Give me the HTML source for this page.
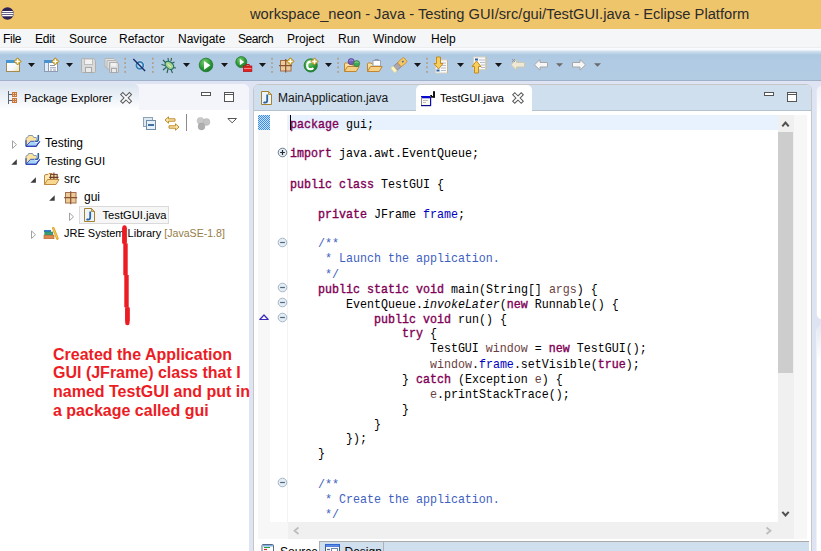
<!DOCTYPE html>
<html><head><meta charset="utf-8">
<style>
*{box-sizing:border-box;margin:0;padding:0}
html,body{width:821px;height:551px;overflow:hidden;background:#DFE4F5;font-family:"Liberation Sans",sans-serif;font-size:12px;color:#000}
.a{position:absolute}
.t{position:absolute;white-space:pre;line-height:14px}
svg{position:absolute;overflow:visible}
#title{left:0;top:0;width:821px;height:29px;background:#EFC56B}
#menu{left:0;top:29px;width:821px;height:18px;background:#F5F6F7}
#tbar{left:0;top:47px;width:821px;height:34px;background:linear-gradient(#EBEDEF 0px,#EBEDEF 1px,#F8FAFD 1px,#F8FAFD 3px,#D3E2F1 4px,#ADC8E1 8px,#B1CBE4 15px,#B2CCE4 33px,#9FB2C9 33px)}
.code{position:absolute;left:290px;top:116.5px;font-family:"Liberation Mono",monospace;font-size:11.67px;white-space:pre;line-height:14.151px;color:#000;transform:scaleY(1.06);transform-origin:0 0}
.kw{color:#7F0055;font-weight:normal;-webkit-text-stroke:0.35px #7F0055}
.fld{color:#0000C0}
.cm{color:#3F5FBF}
.loc{color:#6A3E3E}
.it{font-style:italic}
#red{left:53px;top:345.6px;font-weight:bold;font-size:16px;line-height:18.65px;color:#EC1C24;white-space:pre}
</style></head><body>
<!-- title bar -->
<div id="title" class="a"></div>
<svg style="left:0;top:6px" width="16" height="16" viewBox="0 0 16 16"><circle cx="7.5" cy="7.5" r="6.2" fill="#2C2255"/><rect x="2.2" y="5" width="10.6" height="1.3" fill="#fff"/><rect x="1.5" y="7" width="12" height="1.3" fill="#fff"/><rect x="2.2" y="9" width="10.6" height="1.3" fill="#fff"/></svg>
<div class="t" style="left:250px;top:6px;font-size:14.7px;line-height:17px;color:#2b2b2b">workspace_neon - Java - Testing GUI/src/gui/TestGUI.java - Eclipse Platform</div>
<!-- menu -->
<div id="menu" class="a"></div>
<div class="t" style="left:3px;top:32px;letter-spacing:-0.3px">File</div>
<div class="t" style="left:35px;top:32px;letter-spacing:-0.2px">Edit</div>
<div class="t" style="left:69px;top:32px">Source</div>
<div class="t" style="left:119px;top:32px">Refactor</div>
<div class="t" style="left:178px;top:32px">Navigate</div>
<div class="t" style="left:238px;top:32px;letter-spacing:-0.45px">Search</div>
<div class="t" style="left:287px;top:32px">Project</div>
<div class="t" style="left:338px;top:32px">Run</div>
<div class="t" style="left:373px;top:32px">Window</div>
<div class="t" style="left:431px;top:32px">Help</div>
<!-- toolbar -->
<div id="tbar" class="a"></div>
<svg style="left:0;top:0" width="821" height="100">
<defs>
<g id="plus"><path d="M0,-3.6 L3.6,0 L0,3.6 L-3.6,0 Z" fill="#D9AE35" stroke="#A9851E" stroke-width="0.8"/><path d="M0,-2.2 V2.2 M-2.2,0 H2.2" stroke="#fff" stroke-width="1.3"/></g>
<path id="dd" d="M0,0 H7 L3.5,4 Z" fill="#161616"/>
<path id="ddg" d="M0,0 H7 L3.5,3.6 Z" fill="#6A6A6A"/>
<g id="dots"><rect x="-0.8" y="57.8" width="1.6" height="1.8" fill="#B39C7E"/><rect x="-0.8" y="62.2" width="1.6" height="1.8" fill="#B39C7E"/><rect x="-0.8" y="66.4" width="1.6" height="1.8" fill="#B39C7E"/><rect x="-0.8" y="71" width="1.6" height="1.8" fill="#B39C7E"/></g>
<linearGradient id="gwin" x1="0" y1="0" x2="1" y2="1"><stop offset="0" stop-color="#fff"/><stop offset="0.6" stop-color="#F4F8FC"/><stop offset="1" stop-color="#F2DFA0"/></linearGradient>
<radialGradient id="ggreen" cx="0.4" cy="0.3" r="0.7"><stop offset="0" stop-color="#7CCB6E"/><stop offset="0.6" stop-color="#2F9C3B"/><stop offset="1" stop-color="#1D7A2A"/></radialGradient>
<linearGradient id="gfold" x1="0" y1="0" x2="0" y2="1"><stop offset="0" stop-color="#FCE9B0"/><stop offset="1" stop-color="#EFC772"/></linearGradient>
</defs>
<!-- new wizard -->
<rect x="6.5" y="60.5" width="13" height="11" fill="url(#gwin)" stroke="#A38A52"/>
<rect x="6" y="60" width="11" height="3" fill="#4796D4"/>
<use href="#plus" x="17.6" y="61.4"/>
<use href="#dd" x="28" y="63"/>
<!-- new project -->
<rect x="44.5" y="60.5" width="13" height="11" fill="#fff" stroke="#8F9BB0"/>
<rect x="44" y="60" width="11" height="3" fill="#4A92CF"/>
<rect x="45" y="63" width="3.5" height="8" fill="#DCEEFC"/>
<path d="M48.5,63 V71.5" stroke="#8F9BB0"/>
<path d="M50,65.5 H55 M50,67.8 H56 M50,70 H52 M53,70 H56" stroke="#8A95A8" stroke-width="1"/>
<use href="#plus" x="55.3" y="61.4"/>
<use href="#dd" x="66" y="63"/>
<!-- save disabled -->
<path d="M82.5,58.5 H93.5 L95.5,60.5 V71.5 Q95.5,72.5 94.5,72.5 H82.5 Q81.5,72.5 81.5,71.5 V59.5 Q81.5,58.5 82.5,58.5 Z" fill="#DADADA" stroke="#AFAFAF"/>
<rect x="84.5" y="59" width="8" height="5.5" fill="#F2F2F2" stroke="#BDBDBD"/>
<rect x="85.5" y="67.5" width="6" height="5" fill="#EAEAEA" stroke="#A8A8A8"/>
<!-- save all disabled -->
<path d="M105,58.5 H114 L115.5,60 V67 H105 Z" fill="#E4E4E4" stroke="#B4B4B4"/>
<path d="M107,60.5 H116 L117.5,62 V69 H107 Z" fill="#E0E0E0" stroke="#B4B4B4"/>
<path d="M109.5,62.5 H117 L118.5,64 V72.5 H109.5 Z" fill="#DADADA" stroke="#AFAFAF"/>
<rect x="111" y="63" width="5.5" height="3.5" fill="#F2F2F2"/>
<rect x="111.5" y="68.5" width="5" height="4" fill="#EAEAEA" stroke="#A8A8A8"/>
<use href="#dots" x="125.2" y="0"/>
<!-- skip breakpoints -->
<circle cx="139.8" cy="65.3" r="4.6" fill="#fff"/>
<circle cx="139.8" cy="65.3" r="3.5" fill="#BFDCEF" stroke="#2F7DB3" stroke-width="1.8"/>
<path d="M133.3,59.1 L145.1,71" stroke="#1B2C6E" stroke-width="1.4"/>
<use href="#dots" x="152.8" y="0"/>
<!-- debug bug -->
<g stroke="#2C5F4E" stroke-width="1.1">
<path d="M163,60 L166,63 M161.5,64.5 L165,65.5 M163,70 L166,67.5 M168,58 L168.5,61.5 M171.5,57.8 L171,61 M174.5,62 L171.5,63.5 M176,68 L172.5,67.5 M167,73 L168,69 M172.5,73 L171,69.5"/>
</g>
<ellipse cx="169.4" cy="65.3" rx="4.8" ry="3.4" transform="rotate(40 169.4 65.3)" fill="#A9D38D" stroke="#1E6E66" stroke-width="1.2"/>
<path d="M167.5,64 L171,67" stroke="#E8F5E0" stroke-width="1"/>
<use href="#dd" x="183" y="63"/>
<!-- run -->
<circle cx="206" cy="65" r="6.8" fill="url(#ggreen)" stroke="#1E7A2C" stroke-width="0.8"/>
<path d="M204,60.9 L210.4,65.3 L204,69.7 Z" fill="#fff"/>
<use href="#dd" x="221" y="63"/>
<!-- external tools -->
<circle cx="241.3" cy="62.1" r="5.5" fill="url(#ggreen)" stroke="#1E7A2C" stroke-width="0.8"/>
<path d="M239.8,59 L244.3,62.1 L239.8,65.2 Z" fill="#fff"/>
<rect x="243.5" y="66" width="8.3" height="5.5" fill="#E22424" stroke="#B31515" stroke-width="0.8"/>
<path d="M246,66 V64.5 H249.3 V66" fill="none" stroke="#C01818" stroke-width="1"/>
<path d="M244,68.5 H251.5" stroke="#F7A0A0" stroke-width="0.8"/>
<use href="#dd" x="259" y="63"/>
<use href="#dots" x="272" y="0"/>
<!-- new package -->
<rect x="280.5" y="60.5" width="10.5" height="10.5" fill="#EBCB98" stroke="#A56D4C"/>
<path d="M285.7,59 V72.5 M279,65.7 H292" stroke="#8A5234" stroke-width="1.2"/>
<use href="#plus" x="290.4" y="61.3"/>
<!-- new class -->
<circle cx="310.7" cy="65.4" r="6.6" fill="url(#ggreen)" stroke="#1E7A2C" stroke-width="0.8"/>
<path d="M313.3,62.8 Q312.2,61.6 310.6,61.6 Q307.2,61.6 307.2,65.4 Q307.2,69.2 310.6,69.2 Q312.2,69.2 313.3,68" fill="none" stroke="#fff" stroke-width="2.2"/>
<use href="#plus" x="314.5" y="61.5"/>
<use href="#dd" x="325" y="63"/>
<use href="#dots" x="338.1" y="0"/>
<!-- open type -->
<path d="M344.5,71.5 V64 Q344.5,63 345.5,63 H348 L349,64 H353 V66" fill="url(#gfold)" stroke="#C08632"/>
<path d="M344.5,71.5 L347.5,66.5 H359.2 L356.2,71.5 Z" fill="#F4D184" stroke="#C08632" stroke-linejoin="round"/>
<circle cx="351.2" cy="61.6" r="3.1" fill="#7560B8" stroke="#4A3590" stroke-width="0.6"/>
<path d="M349.3,60.6 Q351.2,59.2 353.1,60.6" stroke="#B8A8E0" stroke-width="0.8" fill="none"/>
<circle cx="356.6" cy="63.6" r="3.1" fill="#45A650" stroke="#26743A" stroke-width="0.6"/>
<path d="M354.7,62.6 Q356.6,61.2 358.5,62.6" stroke="#A8DAA8" stroke-width="0.8" fill="none"/>
<!-- open task -->
<path d="M367.5,71.5 V64 Q367.5,63 368.5,63 H371 L372,64 H376 V66" fill="url(#gfold)" stroke="#C08632"/>
<rect x="373" y="60.5" width="7.5" height="5.5" fill="#fff" stroke="#9AA5B8"/>
<path d="M375,60.5 V59.5 H378.5 V60.5" fill="none" stroke="#8C96A8"/>
<path d="M367.5,71.5 L370.5,66.5 H382.2 L379.2,71.5 Z" fill="#F4D184" stroke="#C08632" stroke-linejoin="round"/>
<!-- search -->
<g transform="translate(399 65) rotate(-41) scale(0.85) translate(-399 -65)">
<rect x="393" y="61.8" width="6.5" height="6.4" fill="#ABA8B2" stroke="#807C88" stroke-width="0.8"/>
<rect x="399.5" y="61.6" width="9.5" height="6.8" rx="1.2" fill="#F4C766" stroke="#C68828" stroke-width="0.9"/>
<path d="M393,61.8 L389.5,61.3 Q388.8,65 389.5,68.7 L393,68.2 Z" fill="#FFF7C8" stroke="#EBD27A" stroke-width="0.7"/>
<rect x="404" y="64.2" width="2" height="1.6" fill="#2F5FA0"/>
</g>
<use href="#dd" x="414" y="63"/>
<use href="#dots" x="427" y="0"/>
<!-- next annotation -->
<path d="M435.5,60 H447.5 V73 H435.5 Z" fill="#F8F9FC" stroke="#D8D2C0"/>
<path d="M447.5,60 V73" stroke="#C8B58A"/>
<path d="M440,63 H446 M441,65.5 H446 M441,68 H446 M441,70.5 H446" stroke="#B7BECA"/>
<rect x="436.5" y="69.5" width="3" height="2" fill="#2B5FA6"/>
<path d="M436.5,57 H440.5 V63.5 H443 L438.5,69 L434,63.5 H436.5 Z" fill="#F6CF5C" stroke="#C58A1F" stroke-linejoin="round"/>
<use href="#dd" x="457" y="63"/>
<!-- prev annotation -->
<path d="M473.5,57 H486 V69.5 H473.5 Z" fill="#F8F9FC" stroke="#D8D2C0"/>
<path d="M486,57 V69.5" stroke="#C8B58A"/>
<rect x="475" y="58.5" width="3" height="2" fill="#2B5FA6"/>
<path d="M479,60 H485 M480,62.5 H485 M481,65 H485 M481,67.5 H485" stroke="#B7BECA"/>
<path d="M474.5,73 H478.5 V66.5 H481 L476.5,61 L472,66.5 H474.5 Z" fill="#F6CF5C" stroke="#C58A1F" stroke-linejoin="round"/>
<use href="#dd" x="495" y="63"/>
<!-- last edit -->
<path d="M511,64.8 L516.5,59.5 V62.5 H524.5 V67 H516.5 V70.2 Z" fill="#EEE8D5" stroke="#CFC8B0" stroke-linejoin="round"/>
<path d="M512,59 L515,62 M515,59 L512,62" stroke="#8A8A8A" stroke-width="0.8"/>
<!-- back -->
<path d="M534.5,64.8 L540,59.5 V62.5 H547.5 V67 H540 V70.2 Z" fill="#F7F7F7" stroke="#A6A6A6" stroke-linejoin="round"/>
<use href="#ddg" x="556" y="63.2"/>
<!-- forward -->
<path d="M585.5,64.8 L580,59.5 V62.5 H572.5 V67 H580 V70.2 Z" fill="#F7F7F7" stroke="#A6A6A6" stroke-linejoin="round"/>
<use href="#ddg" x="594" y="63.2"/>
</svg>


<!-- package explorer -->
<div class="a" style="left:0;top:84px;width:249px;height:467px;background:#fff;border-radius:0 6px 0 0"></div>
<div class="a" style="left:0;top:84px;width:249px;height:26px;background:#F4F5FA;border-radius:0 6px 0 0"></div>
<div class="a" style="left:0;top:84px;width:139px;height:26px;background:linear-gradient(#DAE4EF,#FFFFFF);border-radius:0 5px 0 0"></div>
<div class="t" style="left:24px;top:91px;font-size:11.2px">Package Explorer</div>
<svg style="left:0;top:0" width="821" height="140">
<!-- PE view icon -->
<path d="M8.5,91 V104 M8.5,94.5 H12 M8.5,100.5 H12" stroke="#5E6675" stroke-width="1"/>
<rect x="12" y="92" width="5" height="5" fill="#C8763A"/>
<rect x="12" y="98" width="5" height="5" fill="#C8763A"/>
<path d="M13,93 h1 v1 h-1z M15,93 h1 v1 h-1z M13,95 h1 v1 h-1z M15,95 h1 v1 h-1z M13,99 h1 v1 h-1z M15,99 h1 v1 h-1z M13,101 h1 v1 h-1z M15,101 h1 v1 h-1z" fill="#F2D4B4"/>
<!-- close X -->
<path d="M122.8,94.6 L129.4,101.2 M129.4,94.6 L122.8,101.2" stroke="#5A5A5A" stroke-width="4" stroke-linecap="square"/>
<path d="M122.8,94.6 L129.4,101.2 M129.4,94.6 L122.8,101.2" stroke="#F9FAFC" stroke-width="2" stroke-linecap="square"/>
<!-- min / max -->
<rect x="201.5" y="92.5" width="9" height="3" fill="#fff" stroke="#555"/>
<rect x="224.5" y="92.5" width="9" height="9" fill="#fff" stroke="#555"/>
<path d="M224.5,94.5 H233.5" stroke="#555" stroke-width="1"/>
<!-- collapse all -->
<rect x="143.5" y="117.5" width="9" height="9" fill="#DDE8F0" stroke="#8FA4B8"/>
<rect x="146.5" y="120.5" width="9" height="9" fill="#E6F0F7" stroke="#6F8BA5"/>
<path d="M148,125 H154" stroke="#1F4F8F" stroke-width="1.6"/>
<!-- link with editor -->
<path d="M165,120 L168.5,116.8 V118.8 H175 V121.2 H168.5 V123.2 Z" fill="#FBE7B0" stroke="#C08A2A" stroke-linejoin="round" stroke-width="1"/>
<path d="M179,127 L175.5,123.8 V125.8 H169 V128.2 H175.5 V130.2 Z" fill="#FBE7B0" stroke="#C08A2A" stroke-linejoin="round" stroke-width="1"/>
<path d="M186.5,114 V131" stroke="#8A8A8A" stroke-width="1"/>
<!-- focus on task gray balls -->
<circle cx="200.5" cy="120.8" r="3.4" fill="#C9C9C9" stroke="#B5B5B5" stroke-width="0.5"/>
<circle cx="206.5" cy="122" r="3.4" fill="#C4C4C4" stroke="#B0B0B0" stroke-width="0.5"/>
<circle cx="201.5" cy="126.5" r="3.4" fill="#AFAFAF" stroke="#9C9C9C" stroke-width="0.5"/>
<!-- view menu -->
<path d="M227.8,118.5 H236.5 L232.15,122.8 Z" fill="#fff" stroke="#555" stroke-width="1" stroke-linejoin="round"/>
</svg>


<!-- tree -->
<div class="a" style="left:79px;top:206px;width:90px;height:18px;background:#F6F6F6;border:1px solid #DADADA"></div>
<div class="t" style="left:45px;top:135.6px">Testing</div>
<div class="t" style="left:45px;top:153.6px;font-size:11.5px">Testing GUI</div>
<div class="t" style="left:64px;top:171.5px">src</div>
<div class="t" style="left:84px;top:190.3px">gui</div>
<div class="t" style="left:102.5px;top:207.5px;font-size:11.2px">TestGUI.java</div>
<div class="t" style="left:64px;top:225.8px;font-size:11px">JRE System Library <span style="color:#957D47;font-size:10.6px">[JavaSE-1.8]</span></div>
<svg style="left:0;top:130px" width="260" height="120" viewBox="0 130 260 120">
<defs>
<path id="tri-h" d="M0.5,0.5 L4.5,4.3 L0.5,8.1 Z" fill="#fff" stroke="#A2A2A2" stroke-width="1" stroke-linejoin="round"/>
<path id="tri-f" d="M5.5,0 V5.5 H0 Z" fill="#3C3C3C"/>
<g id="proj">
<path d="M1,12 V4.2 Q1,3.2 2,3.2 H2.6 L3.6,1.2 H7.6 L8.6,3.2 H11.5 V7" fill="#FBE3A2" stroke="#8C97A8" stroke-width="1"/>
<path d="M1,6 V12" stroke="#2B3FB0" stroke-width="1.1"/>
<path d="M1,12 L5.5,7 H14.8 L11.2,12 Z" fill="#A9D3F7" stroke="#3A55C0" stroke-width="1" stroke-linejoin="round"/>
<path d="M1,12 H11.2 L14.8,7" fill="none" stroke="#2236B0" stroke-width="1.1"/>
<path d="M13.3,0.6 V5 Q13.3,7 11.5,7 Q10.8,7 10.3,6.4" fill="none" stroke="#fff" stroke-width="3"/>
<path d="M13.3,0.6 V5 Q13.3,7 11.5,7 Q10.8,7 10.3,6.4" fill="none" stroke="#2A62A8" stroke-width="1.6"/>
</g>
<g id="jfile">
<path d="M0.5,0.5 H7.5 L10.5,3.5 V13.5 H0.5 Z" fill="#EEF4FB" stroke="#A3832F" stroke-width="1"/>
<path d="M7.5,0.5 V3.5 H10.5 Z" fill="#E8C870" stroke="#A3832F" stroke-width="0.8"/>
<path d="M6.2,3.5 V9.5 Q6.2,11.6 4,11.6 Q3.2,11.6 2.6,11" fill="none" stroke="#2C64A2" stroke-width="1.8"/>
</g>
</defs>
<use href="#tri-h" x="12" y="140.3"/>
<use href="#tri-f" x="11.3" y="159.2"/>
<use href="#tri-f" x="30.4" y="177.2"/>
<use href="#tri-f" x="49.2" y="195.2"/>
<use href="#tri-h" x="69" y="212.5"/>
<use href="#tri-h" x="31" y="230.4"/>
<use href="#proj" x="25" y="134.3"/>
<use href="#proj" x="25" y="152.3"/>
<!-- src folder -->
<path d="M44.5,184.5 V176 Q44.5,174.5 46,174.5 H48 L49,173.5 H52 L53,174.5 H55 V179" fill="#FCEAB6" stroke="#C08840" stroke-width="1"/>
<rect x="50.6" y="174.4" width="6.6" height="5" fill="#F5DCA0" stroke="#6A3E28" stroke-width="1"/>
<path d="M53.9,172.6 V179.5 M49.2,177.4 H58.5" stroke="#6A3E28" stroke-width="1.1"/>
<path d="M44.5,184.5 L47.5,179.5 H59 L56,184.5 Z" fill="#F7D891" stroke="#C08840" stroke-width="1" stroke-linejoin="round"/>
<!-- package gui -->
<rect x="65.5" y="192.5" width="10.5" height="10.5" fill="#EACB96" stroke="#A8704E"/>
<path d="M70.7,191.2 V204.2 M64.2,197.7 H77.2" stroke="#8A5234" stroke-width="1.2"/>
<use href="#jfile" x="84" y="208"/>
<!-- books -->
<rect x="44" y="230" width="7" height="2" fill="#2F7EC8"/>
<rect x="44.8" y="232" width="8" height="3" fill="#3AA17A" stroke="#2A7A58" stroke-width="0.6"/>
<rect x="44" y="235.2" width="10" height="3.5" fill="#DE8A4E" stroke="#B0602A" stroke-width="0.6"/>
<path d="M53.3,228.3 L57.4,238.6" stroke="#E2A324" stroke-width="2.6" stroke-linecap="round"/>
<path d="M53.3,228.3 L57.4,238.6" stroke="#F8D868" stroke-width="0.8"/>
</svg>


<svg style="left:0;top:0" width="821" height="551"><g fill="#EC1C24"><rect x="122.3" y="225.2" width="4.4" height="19" rx="2.2"/><rect x="122.3" y="228" width="4.4" height="15.5"/><rect x="123.3" y="243.4" width="4.4" height="31.8"/><rect x="124.3" y="275" width="4.4" height="32.3"/><rect x="125.2" y="307.2" width="4.4" height="18" rx="2.2"/><rect x="125.2" y="307.2" width="4.4" height="14"/></g></svg>
<div id="red" class="a">Created the Application
GUI (JFrame) class that I
named TestGUI and put in
a package called gui</div>

<!-- editor -->
<div class="a" style="left:253px;top:84px;width:559px;height:470px;background:#fff;border:1px solid #C6C6C6;border-radius:6px 6px 0 0"></div>
<div class="a" style="left:254px;top:85px;width:557px;height:26px;background:#CFDFEE;border-bottom:1px solid #B5C3D1;border-radius:5px 5px 0 0"></div>
<div class="a" style="left:416px;top:85px;width:116px;height:26px;background:#fff;border-radius:5px 5px 0 0"></div>
<div class="t" style="left:278px;top:90.5px;color:#151515">MainApplication.java</div>
<div class="t" style="left:440px;top:90.6px;font-size:11.2px">TestGUI.java</div>
<svg style="left:250px;top:84px" width="571" height="30" viewBox="250 84 571 30">
<!-- J file MainApplication -->
<path d="M261.5,91.5 H268.5 L271.5,94.5 V104.5 H261.5 Z" fill="#EEF4FB" stroke="#A3832F" stroke-width="1"/>
<path d="M268.5,91.5 V94.5 H271.5 Z" fill="#E8C870" stroke="#A3832F" stroke-width="0.8"/>
<path d="M267.2,94.5 V100.5 Q267.2,102.6 265,102.6 Q264.2,102.6 263.6,102" fill="none" stroke="#2C64A2" stroke-width="1.8"/>
<!-- JFrame icon -->
<rect x="421" y="96" width="10" height="10" fill="#FBFBF4"/>
<rect x="421" y="96" width="9" height="2.3" fill="#0A0ACF"/>
<rect x="421" y="97" width="1" height="9" fill="#8A8A8A"/>
<rect x="421" y="105" width="10" height="1.2" fill="#0A0A90"/>
<rect x="430" y="97" width="1.2" height="9" fill="#0A0AB0"/>
<path d="M423,100.5 H428 M423,102.5 H426" stroke="#B0B0B0" stroke-width="0.8"/>
<rect x="433" y="91.2" width="2" height="6.4" fill="#111"/>
<rect x="431" y="96" width="4" height="1.7" fill="#111"/>
<rect x="430.2" y="95" width="1.8" height="1.8" fill="#111"/>
<!-- close X -->
<path d="M514.8,94.8 L521.2,101.2 M521.2,94.8 L514.8,101.2" stroke="#5A5A5A" stroke-width="4" stroke-linecap="square"/>
<path d="M514.8,94.8 L521.2,101.2 M521.2,94.8 L514.8,101.2" stroke="#fff" stroke-width="2" stroke-linecap="square"/>
<!-- min / max -->
<rect x="764.5" y="92.5" width="9" height="3" fill="#fff" stroke="#555"/>
<rect x="787.5" y="92.5" width="9" height="9" fill="#fff" stroke="#555"/>
<path d="M787.5,94.5 H796.5" stroke="#555" stroke-width="1"/>
</svg>


<!-- rulers -->
<div class="a" style="left:258px;top:115px;width:12px;height:407px;background:#F7F7F7"></div>
<div class="a" style="left:287px;top:115px;width:1px;height:407px;background:#F3F3F3"></div>
<div class="a" style="left:288px;top:115px;width:490px;height:15px;background:#E8F2FE"></div>
<!-- scrollbars -->
<div class="a" style="left:778px;top:115px;width:16px;height:424px;background:#F0F0F0"></div>
<div class="a" style="left:778px;top:132px;width:15px;height:241px;background:#CDCDCD"></div>
<div class="a" style="left:258px;top:522px;width:30px;height:17px;background:#F7F7F7"></div>
<div class="a" style="left:288px;top:522px;width:490px;height:17px;background:#F0F0F0"></div>
<div class="a" style="left:794px;top:115px;width:13px;height:424px;background:#F7F7F7"></div>
<!-- bottom tabs -->
<div class="a" style="left:254px;top:541px;width:555px;height:10px;background:#CFDFEE;border-top:1px solid #A9A9A9"></div>
<div class="a" style="left:254px;top:541px;width:65px;height:10px;background:#fff"></div>
<div class="a" style="left:319px;top:541px;width:65px;height:10px;background:#CFDFEE;border-left:1px solid #B0B0B0;border-right:1px solid #B0B0B0;border-top:1px solid #A9A9A9"></div>
<div class="t" style="left:280px;top:545px">Source</div>
<div class="t" style="left:344.5px;top:545px">Design</div>

<!-- right panels -->
<div class="a" style="left:816px;top:85px;width:20px;height:235px;background:linear-gradient(#EEF2FA,#fff 30px);border:1px solid #E6E9F2;border-radius:6px 0 0 6px"></div>
<div class="a" style="left:816px;top:325px;width:20px;height:240px;background:linear-gradient(#E3E9F4,#fff 35px);border:1px solid #EEF0F6;border-radius:7px 0 0 0"></div>

<!-- code -->
<div class="code"><span class="kw">package</span> gui;

<span class="kw">import</span> java.awt.EventQueue;

<span class="kw">public</span> <span class="kw">class</span> TestGUI {

    <span class="kw">private</span> JFrame <span class="fld">frame</span>;

    <span class="cm">/**</span>
<span class="cm">     * Launch the application.</span>
<span class="cm">     */</span>
    <span class="kw">public</span> <span class="kw">static</span> <span class="kw">void</span> main(String[] <span class="loc">args</span>) {
        EventQueue.<span class="it">invokeLater</span>(<span class="kw">new</span> Runnable() {
            <span class="kw">public</span> <span class="kw">void</span> run() {
                <span class="kw">try</span> {
                    TestGUI <span class="loc">window</span> = <span class="kw">new</span> TestGUI();
                    <span class="loc">window</span>.<span class="fld">frame</span>.setVisible(<span class="kw">true</span>);
                } <span class="kw">catch</span> (Exception <span class="loc">e</span>) {
                    <span class="loc">e</span>.printStackTrace();
                }
            }
        });
    }

    <span class="cm">/**</span>
<span class="cm">     * Create the application.</span>
<span class="cm">     */</span></div>
<div class="a" style="left:290px;top:115px;width:1px;height:15px;background:#000"></div>
<svg style="left:250px;top:110px" width="571" height="441" viewBox="250 110 571 441">
<defs>
<pattern id="dith" width="2" height="2" patternUnits="userSpaceOnUse"><rect width="2" height="2" fill="#C8E0FA"/><rect width="1" height="1" fill="#3B8CEB"/><rect x="1" y="1" width="1" height="1" fill="#3B8CEB"/></pattern>
<g id="fm"><circle cx="0" cy="0" r="4.3" fill="#E3EDF5" stroke="#9DAFC2" stroke-width="0.9"/><path d="M-2.4,0 H2.4" stroke="#56667A" stroke-width="1.2"/></g>
<g id="fp"><circle cx="0" cy="0" r="4.3" fill="#E3EDF5" stroke="#5F6F82" stroke-width="0.9"/><path d="M-2.4,0 H2.4 M0,-2.4 V2.4" stroke="#2A2A2A" stroke-width="1.2"/></g>
</defs>
<rect x="258" y="115" width="12" height="15" fill="url(#dith)"/>
<use href="#fp" x="282.5" y="152.5"/>
<use href="#fm" x="282.5" y="242.5"/>
<use href="#fm" x="282.5" y="287.5"/>
<use href="#fm" x="282.5" y="302.5"/>
<use href="#fm" x="282.5" y="317.5"/>
<use href="#fm" x="282.5" y="482.5"/>
<path d="M259.8,319.5 L264,315 L268.2,319.5 Z" fill="none" stroke="#3A2AB5" stroke-width="1.2" stroke-linejoin="round"/>
<!-- scroll chevrons -->
<path d="M782.3,126.3 L785.5,122.6 L788.7,126.3" fill="none" stroke="#505050" stroke-width="2"/>
<path d="M782.3,511.8 L785.5,515.5 L788.7,511.8" fill="none" stroke="#505050" stroke-width="2"/>
<path d="M298.5,527.5 L294.5,530.8 L298.5,534" fill="none" stroke="#BDBDBD" stroke-width="1.8"/>
<path d="M766.5,527.5 L770.5,530.8 L766.5,534" fill="none" stroke="#BDBDBD" stroke-width="1.8"/>
<!-- bottom tab icons -->
<rect x="262" y="544.5" width="11.5" height="10" rx="1" fill="#fff" stroke="#5A6A80"/><rect x="262.5" y="545" width="10.5" height="1.5" fill="#7FB0E8"/>
<path d="M264,547.5 H270" stroke="#2A9A3A" stroke-width="1"/>
<path d="M264,549.5 H267" stroke="#D02828" stroke-width="1.2"/>
<rect x="325.5" y="544.5" width="14" height="10" fill="#F4F8FC" stroke="#4A5A70"/>
<rect x="325" y="544" width="15" height="2.8" fill="#2F62D0"/>
<path d="M326,545.4 H339" stroke="#7AA6EE" stroke-width="0.7"/>
<path d="M327,549.5 H330" stroke="#5A6A80" stroke-width="1.2"/>
<rect x="331.5" y="548.5" width="6" height="3" fill="#fff" stroke="#6A88A8"/>
</svg>

</body></html>
